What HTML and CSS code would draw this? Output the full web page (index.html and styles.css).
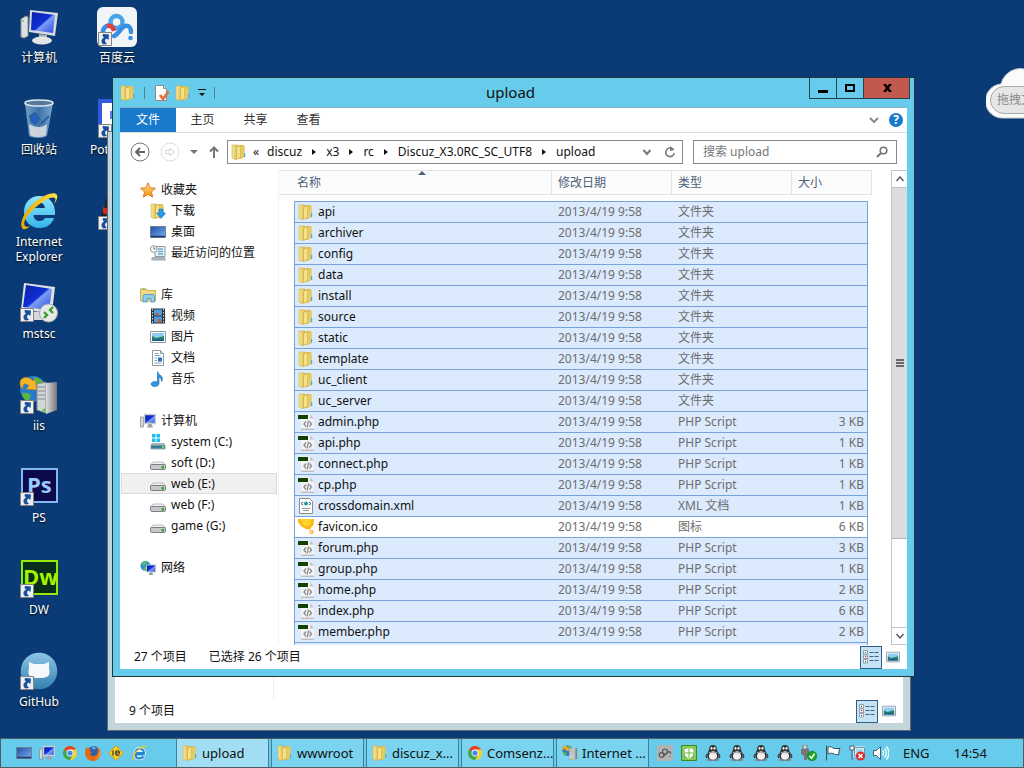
FILE: index.html
```html
<!DOCTYPE html>
<html lang="zh-CN">
<head>
<meta charset="utf-8">
<title>upload</title>
<link rel="stylesheet" href="styles.css">
</head>
<body>
<svg class="defs" aria-hidden="true">
  <defs>
    <linearGradient id="gFold" x1="0" x2="1"><stop offset="0" stop-color="#f8e99c"/><stop offset="1" stop-color="#dcb948"/></linearGradient>
    <linearGradient id="gScreen" x1="0" x2="1" y2="1"><stop offset="0" stop-color="#0a1fa0"/><stop offset=".5" stop-color="#1030d8"/><stop offset=".55" stop-color="#7d9df5"/><stop offset="1" stop-color="#2a4ee0"/></linearGradient>
    <linearGradient id="gDesk" x1="0" x2="1" y2="1"><stop offset="0" stop-color="#1d4fa8"/><stop offset="1" stop-color="#7ab0ee"/></linearGradient>
    <linearGradient id="gIe" x1="0" y1="0" x2="0" y2="1"><stop offset="0" stop-color="#8fe6ff"/><stop offset="1" stop-color="#35b4ea"/></linearGradient>
    <linearGradient id="gGold" x1="0" x2="1"><stop offset="0" stop-color="#e8a800"/><stop offset="1" stop-color="#ffe14a"/></linearGradient>
    <linearGradient id="gHub" x1="0" y1="0" x2="0" y2="1"><stop offset="0" stop-color="#8cc6e6"/><stop offset="1" stop-color="#3480b0"/></linearGradient>
    <linearGradient id="gBin" x1="0" x2="1"><stop offset="0" stop-color="#8fb6d8"/><stop offset=".5" stop-color="#4a7fb8"/><stop offset="1" stop-color="#9cc0de"/></linearGradient>
    <linearGradient id="gTower" x1="0" x2="1"><stop offset="0" stop-color="#ddd"/><stop offset="1" stop-color="#777"/></linearGradient>
    <linearGradient id="gStar" x1="0" y1="0" x2="0" y2="1"><stop offset="0" stop-color="#ffe27a"/><stop offset="1" stop-color="#f08a18"/></linearGradient>
  </defs>
  <symbol id="folder" viewBox="0 0 16 16"><path d="M1 1h6v13l-3 1.500L1 14z" fill="url(#gFold)" stroke="#cfae46" stroke-width=".6"/><path d="M8 1h4.500l1 1v11l-4 2-4-.5 2.500-1z" fill="#dfc04e"/><path d="M5.500 3.500 9.500 1.500v12l-4 2z" fill="#f5e18a" stroke="#c9a63a" stroke-width=".6"/><path d="M9.500 2.500h3.700V13l-3.700.8z" fill="#e6cb62"/><path d="M13 9h1.200v4H13z" fill="#4aa8e8"/></symbol>
  <symbol id="php" viewBox="0 0 16 16"><path d="M3 .5h9l4 4V15.500H3z" fill="#f3f3f3"/><path d="M12 .5V4.500h4z" fill="#c4c4c4"/><path d="M3 15.200h13" stroke="#a9a9a9"/><path d="M0 1h10v4H0z" fill="#124200"/><path d="m8 7.500-2 2.500 2 2.500M11.500 7.500l2 2.500-2 2.500M10.500 6.500 9.200 13.500" fill="none" stroke="#8c8c8c" stroke-width="1.300"/></symbol>
  <symbol id="xml" viewBox="0 0 16 16"><path d="M1.500.5h10l3 3v12h-13z" fill="#fff" stroke="#8f8f8f"/><path d="m5 4-2 1.500L5 7m6-3 2 1.500L11 7" fill="none" stroke="#335c85"/><circle cx="8" cy="5.500" r="2" fill="#2397a0"/><path d="M4 10.500h8M5 12.500h6" stroke="#8d949c"/></symbol>
  <symbol id="ico" viewBox="0 0 16 16"><path d="M0 0h16l-.5 6-2 2-1.500 2.500-4-.5L3.500 7.500 0 3z" fill="#fdb515"/><path d="M3 0h10v5L9 7.500 5 6z" fill="#ffd42a"/><circle cx="13.500" cy="13" r="1.700" fill="#fff0b0" stroke="#f3a216"/></symbol>
  <symbol id="star" viewBox="0 0 16 16"><path d="m8 .8 2.200 4.900 5.300.5-4 3.600 1.200 5.400L8 12.400l-4.700 2.800 1.200-5.400-4-3.600 5.300-.5z" fill="url(#gStar)" stroke="#d96b14" stroke-width=".8"/></symbol>
  <symbol id="download" viewBox="0 0 16 16"><use href="#folder" width="16" height="16"/><path d="M9 6h4v4h2.500L11 15.500 6.500 10H9z" fill="#2a9aea" stroke="#1272b8" stroke-width=".6"/></symbol>
  <symbol id="desk" viewBox="0 0 16 16"><path d="M.5 2.500h15v11H.5z" fill="url(#gDesk)" stroke="#6b7f99"/><path d="M1 12.500h14" stroke="#213c6a" stroke-width="1.500"/></symbol>
  <symbol id="recent" viewBox="0 0 16 16"><path d="M5 1.500h10v10H5z" fill="#e8eff3" stroke="#8f9aa2"/><path d="M8 4h5M8 6.500h5M8 9h5" stroke="#6aaed0" stroke-width="1.300"/><path d="M2 12h13l1 3.500H1z" fill="#a7b0b6"/><circle cx="3.800" cy="4" r="3.300" fill="#fff" stroke="#8d979d"/><path d="M3.800 2v2h1.800" fill="none" stroke="#555" stroke-width=".8"/></symbol>
  <symbol id="library" viewBox="0 0 16 16"><path d="M.5 2h6l1 1.500h8V14H.5z" fill="#f1d98a" stroke="#cfae4e"/><path d="M2 2h3" stroke="#55b848"/><path d="M3 15V9.500C3 8 4 7.500 5 7.500h7c1.500 0 2.500.7 2.500 2V15H11v-3.500H7V15z" fill="#8fd0f2" stroke="#3b93c6" stroke-width=".8"/></symbol>
  <symbol id="video" viewBox="0 0 16 16"><path d="M1 .5h14v15H1z" fill="#2c3138"/><path d="M4 1.500h8v6H4zM4 8.500h8v6H4z" fill="#4d9fdc"/><path d="m5 7 2-3 2 3zm2 7 2-4 3 4z" fill="#c2613a"/><path d="M2.500 1v14M13.500 1v14" stroke="#dfe7ee" stroke-dasharray="1.500 1.500"/></symbol>
  <symbol id="picture" viewBox="0 0 16 16"><path d="M.5 2.500h15v11H.5z" fill="#fff" stroke="#8b969f"/><path d="M2 4h12v8H2z" fill="#8ecdf0"/><path d="m2 7 4 2 8-2v5H2z" fill="#27806a"/><path d="m2 11 6-1 6 1v1H2z" fill="#1d5a92"/></symbol>
  <symbol id="doc" viewBox="0 0 16 16"><path d="M2.500.5h8l3 3v12h-11z" fill="#fff" stroke="#8c98a2"/><path d="M10.500.5v3h3" fill="#d5dee5" stroke="#8c98a2"/><path d="M4.500 3.500h4M4.500 5.500h6M4.500 8h2.500M4.500 10.500h2.500M4.500 13h7" stroke="#8aa6be"/><path d="M8 7.500h4v4H8z" fill="#2c70ba"/></symbol>
  <symbol id="music" viewBox="0 0 16 16"><path d="M7.500.5c.5 3 5 3.500 5 7.500 0 1-.5 2-1 2.500.2-3-1.500-4-2.500-4.300v6.300c0 2-2 3-4 3-2.500 0-4-1-4-2.500S3 10.500 5 10.500c1 0 2 .3 2.500.6z" fill="#2e97e0" stroke="#1c6ab0" stroke-width=".6"/></symbol>
  <symbol id="pc" viewBox="0 0 16 16"><path d="M.5 4h3v10h-3z" fill="#d4d9dd" stroke="#7e868c" stroke-width=".7"/><path d="M4.500 1.500h11v9h-11z" fill="url(#gScreen)" stroke="#c7ccd0" stroke-width="1.400"/><path d="M8.500 11h3l1.500 3.500H7z" fill="#9ba3aa"/></symbol>
  <symbol id="sysdrive" viewBox="0 0 16 16"><path d="M2 0h3.500v3.500H2zM6.500 0H10v3.500H6.500zM2 4.500h3.500V8H2zM6.500 4.500H10V8H6.500z" fill="#16bff2"/><path d="m2 9h12l1.500 2v4.500H.5V11z" fill="#aab4bc"/><path d="M1 11.500h14v3H1z" fill="#397b98"/><path d="M12 12h2v2h-2z" fill="#6be050"/></symbol>
  <symbol id="drive" viewBox="0 0 16 16"><path d="M3 7h10l2.500 3H.5z" fill="#f2f2f2" stroke="#a1a5a9" stroke-width=".7"/><rect x=".5" y="9.500" width="15" height="5" rx="1.200" fill="#c4c8cb" stroke="#7c8084"/><path d="M11.500 11h2.500v2.500h-2.500z" fill="#32a32a"/></symbol>
  <symbol id="network" viewBox="0 0 16 16"><circle cx="5.500" cy="6" r="5" fill="#2d8fd6"/><path d="M2 3c2-2 4-2 5-1L5 5 3 6zm1 5 3-1 1 3-2 1z" fill="#5cc44a"/><path d="M6.500 5h9v7h-9z" fill="url(#gScreen)" stroke="#b4bec8"/><path d="M10 12.500h2l1.500 2.500h-5z" fill="#8c98a5"/></symbol>
  <symbol id="props" viewBox="0 0 16 16"><path d="M1.500.5h8l3 3v12h-11z" fill="#fff" stroke="#8d8d8d"/><path d="M9.500.5v3h3" fill="#ddd" stroke="#8d8d8d"/><path d="m6 10 3 4 5.500-7.500" fill="none" stroke="#e8683a" stroke-width="2.600"/></symbol>
  <symbol id="details" viewBox="0 0 16 14"><path d="M.5.500h4v3.500h-4zM.5 5h4v3.500h-4zM.5 9.500h4V13h-4z" fill="#fff" stroke="#7e8b95" stroke-width=".8"/><path d="M2 2h1v1H2zM2 11h1v1H2z" fill="#345"/><path d="M2 6h1.200v1.200H2z" fill="#d22"/><path d="M6.500 2.500h4M11.500 2.500h4M6.500 6.500h4M11.500 6.500h4M6.500 10.500h4M11.500 10.500h4" stroke="#4b5f70"/></symbol>
  <symbol id="shortcut" viewBox="0 0 14 14"><path d="M.5.500h13v13H.5z" fill="#e9f0f8" stroke="#8b8378"/><path d="M5.500 12.500c-3-2-2.500-5.500.5-7L4.500 4 5 2l6 .5-.5 5.500-2-1.500c-2 1-2 3 .5 5.500z" fill="#1c4f9c"/></symbol>
  <symbol id="ie" viewBox="0 0 40 40"><path d="M20 5C11 5 5 12 5 21s6 16 16 16c7 0 12-4 14-10h-9c-1 2-3 3-5 3-4 0-6-2-6.500-6H36C37 12 30 5 20 5zm-5.500 12c.5-4 2.500-5.500 5.800-5.500 3.200 0 5.200 2 5.700 5.500z" fill="url(#gIe)"/><path d="M4 38C-1 34 5 20 16 11 26 3 36 0 38 4c1 3-1 6-3 9 1-3 2-5 1-6-2-2-10 1-19 9C9 23 3 31 6 35c1 1 3 1 5 0-2 2-5 4-7 3z" fill="url(#gGold)"/></symbol>
  <symbol id="ie-small" viewBox="0 0 16 16"><path d="M13.500 9.500H4.500c0 5 6 4.500 8 2M4.500 8c0-5.500 8.500-5.500 8.500 0z" fill="none" stroke="#fff" stroke-width="3.600"/><path d="M13.500 9.500H4.500c0 5 6 4.500 8 2M4.500 8c0-5.500 8.500-5.500 8.500 0z" fill="none" stroke="#2489d0" stroke-width="2.200"/><path d="M3 15c-3-1-1-6 4-10s8-4.500 8-2.500" fill="none" stroke="#efc22c" stroke-width="1.300"/></symbol>
  <symbol id="chrome" viewBox="0 0 16 16"><circle cx="8" cy="8" r="7" fill="#f9cf2c"/><path d="M8 8 1.900 4.500A7 7 0 0 1 14.100 4.500H8z" fill="#dd4434"/><path d="M1.900 4.500A7 7 0 0 0 8 15l3-5-3-2z" fill="#39a853"/><circle cx="8" cy="8" r="3.400" fill="#fff"/><circle cx="8" cy="8" r="2.600" fill="#4284e8"/></symbol>
  <symbol id="firefox" viewBox="0 0 16 16"><circle cx="8.500" cy="7.500" r="6.500" fill="#2d5fa6"/><path d="M6 2c2-1 4 0 5 1l-2 2z" fill="#6ca8e2"/><path d="M1 2c1 0 1.500 1 2 1.500L6 4 4.500 6l2.500 1-2 2c1 3 6 3 7.500-1C13.500 5 12 3 11 2c4 1 5.500 5 4.300 8.500C14 14 11 16 8 16 3 16 0 12 0 8c0-2 .5-4 1-6z" fill="#e66a12"/><path d="M15 5c1 4-1 8-5 9 3-2 4-4 4-6z" fill="#fbb52c"/></symbol>
  <symbol id="ietester" viewBox="0 0 16 16"><path d="m8 .5 7.500 7.500L8 15.500.5 8z" fill="#f7ca28" stroke="#b98d18" stroke-width=".8"/><path d="M5 5.500v5M8 8h3.500c0-3-3.800-3-3.800 0s2.800 2.800 3.800 1.500" fill="none" stroke="#333" stroke-width="1.200"/></symbol>
  <symbol id="iis" viewBox="0 0 40 40"><circle cx="14" cy="14" r="13" fill="#2679cd"/><path d="M3 18c4-1 8 0 9 3l-3 6c-4-2-6-5-6-9zM15 2c4 0 9 3 10 7l-6 4-4-5z" fill="#59b740"/><path d="M1 8c0-6 8-8 13-2l2-2 2 11-11-1 3-3C6 7 3 9 4 14 2 13 1 11 1 8z" fill="#f3b32b" stroke="#bd7d12" stroke-width=".6"/><path d="M18 9 27 7v31l-9-3z" fill="#d2d6d9" stroke="#888"/><path d="m27 8 11-1v28l-11 4z" fill="url(#gTower)"/><path d="M19 12h7M19 16h7M19 20h7M19 24h7" stroke="#858a90"/><circle cx="25" cy="35" r="1.500" fill="#4bd02c"/></symbol>
  <symbol id="qq" viewBox="0 0 16 16"><path d="M2 9C1 11 .5 13 2 13zM14 9c1 2 1.500 4 0 4z" fill="#333" stroke="#444"/><path d="M3 14c-2 2 3 2.500 5 1 2 1.500 7 1 5-1z" fill="#aaa" stroke="#444" stroke-width=".5"/><path d="M8 0C4.500 0 4 3 4 5.500 2 8 2 10 3 13c2 2.500 8 2.500 10 0 1-3 1-5-1-7.500C12 3 11.500 0 8 0z" fill="#333"/><ellipse cx="8" cy="11" rx="4" ry="3.800" fill="#f2f2f2"/><ellipse cx="6.500" cy="3.300" rx="1" ry="1.400" fill="#fff"/><ellipse cx="9.500" cy="3.300" rx="1" ry="1.400" fill="#fff"/><path d="M5.500 6h5L8 7.300z" fill="#bbb"/><path d="M4 7.500c2 1 6 1 8 0" fill="none" stroke="#ccc" stroke-width="1.200"/></symbol>
</svg>

<main class="desktop">
  <ul class="shortcuts">
    <li><a href="#"><svg class="big" viewBox="0 0 40 40"><path d="m2 12 5-3 2 1v19l-4 2-3-1z" fill="#dde0e2" stroke="#8a8f94"/><circle cx="4" cy="14" r="1" fill="#5ae02e"/><path d="m11 3 28 3-3 23-26-4z" fill="#d8dcdf"/><path d="m13 5 23 3-2 18-22-3z" fill="url(#gScreen)"/><path d="m20 27 8 1v4l-8-1z" fill="#a9adb1"/><ellipse cx="23" cy="33.500" rx="10" ry="4" fill="#e3e5e7"/></svg><span>计算机</span></a></li>
    <li><a href="#"><svg class="big" viewBox="0 0 40 40"><path d="m6 4 4 33c5 3 14 3 18 0l6-33z" fill="url(#gBin)" opacity=".8"/><path d="m10 25 1 11c4 3 12 3 16 0l1-11c-4 4-12 4-18 0z" fill="#d9dde2" opacity=".9"/><ellipse cx="20" cy="4" rx="14" ry="3" fill="#55779a" stroke="#dce7ef" stroke-width="1.500"/><path d="m11 17 5-3 4 6-4 5-3-2zM30 17l-8 8" fill="#2860c8" stroke="#2860a0" stroke-width="2"/></svg><span>回收站</span></a></li>
    <li><a href="#"><svg class="big"><use href="#ie"/></svg><span>Internet Explorer</span></a></li>
    <li><a href="#"><svg class="big" viewBox="0 0 40 40"><path d="m5 0 31 4-3 26-31-3z" fill="#dfe2e5"/><path d="m7 2 26 4-3 21-26-3z" fill="url(#gScreen)"/><path d="M14 29h12v8H14z" fill="#d5d8da"/><circle cx="29.500" cy="30" r="9" fill="#e8e9ea" stroke="#aaa"/><path d="m25 29 3 3-3 3M34 24l-3 3 3 3" fill="none" stroke="#36a02c" stroke-width="2.400"/><use href="#shortcut" x="1" y="25" width="14" height="14"/></svg><span>mstsc</span></a></li>
    <li><a href="#"><svg class="big" viewBox="0 0 40 40"><use href="#iis" width="40" height="40"/><use href="#shortcut" x="1" y="25" width="14" height="14"/></svg><span>iis</span></a></li>
    <li><a href="#"><svg class="big" viewBox="0 0 40 40"><path d="M3 2h35v33H3z" fill="#0d0a4c" stroke="#84b8f0" stroke-width="2"/><text class="adobe" x="8" y="26" fill="#9bc9fb">Ps</text><use href="#shortcut" x="1" y="25" width="14" height="14"/></svg><span>PS</span></a></li>
    <li><a href="#"><svg class="big" viewBox="0 0 40 40"><path d="M3 2h35v33H3z" fill="#072d1c" stroke="#93ea00" stroke-width="2"/><text class="adobe" x="4" y="26" fill="#a5f200">Dw</text><use href="#shortcut" x="1" y="25" width="14" height="14"/></svg><span>DW</span></a></li>
    <li><a href="#"><svg class="big" viewBox="0 0 40 40"><circle cx="20" cy="20" r="18.300" fill="url(#gHub)"/><path d="m10 11 5 2h10l5-2v6c2 8-1 10-10 10S8 25 10 17z" fill="#f5f8fa"/><use href="#shortcut" x="1" y="25" width="14" height="14"/></svg><span>GitHub</span></a></li>
    <li><a href="#"><svg class="big" viewBox="0 0 40 40"><rect width="40" height="40" rx="6" fill="#f2f5f8"/><g fill="none" stroke-width="4.500"><circle cx="19.500" cy="15" r="6" stroke="#48a5e8"/><path d="M17 29c4-1 7-9 11-10 5-1 6 3 6 6" stroke="#3b8fe0" stroke-linecap="round"/><path d="M6 28c-1-7 3-10 7-9" stroke="#3b8fe0"/><path d="M10 19c4-1 6 1 7 5" stroke="#e43e3c"/></g><circle cx="33.500" cy="31" r="2.300" fill="#3b8fe0"/><use href="#shortcut" x="1" y="25" width="14" height="14"/></svg><span>百度云</span></a></li>
    <li><a href="#"><svg class="big" viewBox="0 0 40 40"><path d="M1 0h38v39H1z" fill="#3558e0"/><path d="M5 4h30v30H5z" fill="#fff"/><path d="M13 12h14v8H13z" fill="#5b7bf0"/><use href="#shortcut" x="1" y="25" width="14" height="14"/></svg><span>PotPlayer</span></a></li>
    <li><a href="#" aria-label="QQ"><svg class="big" viewBox="0 0 40 40"><path d="M20 0C10 0 8 8 8 15 3 22 2 30 5 36h30c3-6 2-14-3-21C32 8 30 0 20 0z" fill="#23232a"/><path d="M6 16c8 4 20 4 28 0v6c-8 4-20 4-28 0z" fill="#e02a1c"/><ellipse cx="20" cy="30" rx="11" ry="8" fill="#fff"/><use href="#shortcut" x="1" y="25" width="14" height="14"/></svg></a></li>
  </ul>

  <aside class="cloud">
    <svg viewBox="0 0 76 54" class="cloud-shape"><path d="M18 52a17 17 0 0 1-3-34A20 20 0 0 1 50 10a20 20 0 0 1 16 10 17 17 0 0 1-4 32z" fill="#fbfbfb" stroke="#c9ccd0"/></svg>
    <button type="button" class="cloud-label">拖拽文</button>
  </aside>

  <section class="window window-back" aria-label="wwwroot">
    <div class="back-body"><div class="back-side"></div></div>
    <footer class="status">
      <span>9 个项目</span>
      <div class="views"><button type="button" class="view on" aria-label="详细信息"><svg class="ico"><use href="#details"/></svg></button><button type="button" class="view" aria-label="大图标"><svg class="ico14"><use href="#picture"/></svg></button></div>
    </footer>
  </section>

  <section class="window window-front" aria-label="upload">
    <header class="titlebar">
      <div class="quick">
        <svg class="ico"><use href="#folder"/></svg><i class="bar"></i>
        <button type="button" aria-label="属性"><svg class="ico"><use href="#props"/></svg></button>
        <button type="button" aria-label="新建文件夹"><svg class="ico"><use href="#folder"/></svg></button>
        <button type="button" aria-label="自定义"><svg class="caret" viewBox="0 0 8 8"><path d="M0 0h8v1H0zM1 4h6L4 7z" fill="#111"/></svg></button><i class="bar"></i>
      </div>
      <h1>upload</h1>
      <div class="controls">
        <button type="button" aria-label="最小化"><svg viewBox="0 0 12 12"><path d="M1 8h10v3H1z"/></svg></button>
        <button type="button" aria-label="最大化"><svg viewBox="0 0 12 12"><path d="M1 2h10v8H1zm2 2v4h6V4z" fill-rule="evenodd"/></svg></button>
        <button type="button" class="close" aria-label="关闭"><svg viewBox="0 0 12 12"><path d="M2 2h3l1.500 2L8 2h3L8 6l3 4H8L6.500 8 5 10H2l3-4z"/></svg></button>
      </div>
    </header>
    <nav class="ribbon">
      <button type="button" class="file">文件</button><button type="button">主页</button><button type="button">共享</button><button type="button">查看</button>
      <span class="grow"></span>
      <button type="button" class="icon-btn" aria-label="展开功能区"><svg class="chev" viewBox="0 0 10 10"><path d="m1 3 4 4 4-4" fill="none" stroke="#8a8a8a" stroke-width="2"/></svg></button>
      <button type="button" class="icon-btn" aria-label="帮助"><span class="help">?</span></button>
    </nav>
    <div class="nav">
      <button type="button" class="icon-btn" aria-label="后退"><svg class="round" viewBox="0 0 20 20"><circle cx="10" cy="10" r="9" fill="none" stroke="#747474"/><path d="M15 10H6m4-4-4 4 4 4" fill="none" stroke="#666" stroke-width="2"/></svg></button>
      <button type="button" class="icon-btn" aria-label="前进"><svg class="round" viewBox="0 0 20 20"><circle cx="10" cy="10" r="9" fill="none" stroke="#dcdcdc"/><path d="M5.500 8.500H10V6l4.500 4-4.500 4v-2.500H5.500z" fill="none" stroke="#d0d0d0"/></svg></button>
      <button type="button" class="icon-btn history" aria-label="最近的位置"><svg viewBox="0 0 8 8"><path d="M0 2h8L4 6z" fill="#777"/></svg></button>
      <button type="button" class="icon-btn up" aria-label="向上"><svg viewBox="0 0 12 14"><path d="M6 13V3M2 6.500l4-4 4 4" fill="none" stroke="#777" stroke-width="2"/></svg></button>
      <div class="address">
        <svg class="ico"><use href="#folder"/></svg>
        <span class="more">«</span>
        <a href="#">discuz</a><i class="sep"></i><a href="#">x3</a><i class="sep"></i><a href="#">rc</a><i class="sep"></i><a href="#">Discuz_X3.0RC_SC_UTF8</a><i class="sep"></i><a href="#">upload</a>
        <span class="grow"></span>
        <button type="button" class="icon-btn" aria-label="历史"><svg class="chev" viewBox="0 0 10 10"><path d="m1.500 3 3.500 4 3.500-4" fill="none" stroke="#777" stroke-width="2"/></svg></button>
        <button type="button" class="icon-btn refresh" aria-label="刷新"><svg viewBox="0 0 12 12"><path d="M9 3.200A4.300 4.300 0 1 0 10.300 7" fill="none" stroke="#777" stroke-width="1.600"/><path d="M6 0v5l4.500-1z" fill="#777"/></svg></button>
      </div>
      <label class="search"><input type="text" placeholder="搜索 upload" aria-label="搜索 upload"><svg viewBox="0 0 12 12"><circle cx="7.500" cy="4.500" r="3.300" fill="none" stroke="#777" stroke-width="1.600"/><path d="m5 7-4 4" stroke="#777" stroke-width="2.200"/></svg></label>
    </div>
    <div class="content">
      <aside class="tree">
        <ul>
          <li><a href="#"><svg class="ico"><use href="#star"/></svg>收藏夹</a></li>
          <li class="sub"><a href="#"><svg class="ico"><use href="#download"/></svg>下载</a></li>
          <li class="sub"><a href="#"><svg class="ico"><use href="#desk"/></svg>桌面</a></li>
          <li class="sub"><a href="#"><svg class="ico"><use href="#recent"/></svg>最近访问的位置</a></li>
        </ul>
        <ul>
          <li><a href="#"><svg class="ico"><use href="#library"/></svg>库</a></li>
          <li class="sub"><a href="#"><svg class="ico"><use href="#video"/></svg>视频</a></li>
          <li class="sub"><a href="#"><svg class="ico"><use href="#picture"/></svg>图片</a></li>
          <li class="sub"><a href="#"><svg class="ico"><use href="#doc"/></svg>文档</a></li>
          <li class="sub"><a href="#"><svg class="ico"><use href="#music"/></svg>音乐</a></li>
        </ul>
        <ul>
          <li><a href="#"><svg class="ico"><use href="#pc"/></svg>计算机</a></li>
          <li class="sub"><a href="#"><svg class="ico"><use href="#sysdrive"/></svg>system (C:)</a></li>
          <li class="sub"><a href="#"><svg class="ico"><use href="#drive"/></svg>soft (D:)</a></li>
          <li class="sub current"><a href="#"><svg class="ico"><use href="#drive"/></svg>web (E:)</a></li>
          <li class="sub"><a href="#"><svg class="ico"><use href="#drive"/></svg>web (F:)</a></li>
          <li class="sub"><a href="#"><svg class="ico"><use href="#drive"/></svg>game (G:)</a></li>
        </ul>
        <ul>
          <li><a href="#"><svg class="ico"><use href="#network"/></svg>网络</a></li>
        </ul>
      </aside>
      <div class="list">
        <table class="files">
          <thead><tr><th class="sorted">名称</th><th>修改日期</th><th>类型</th><th>大小</th></tr></thead>
          <tbody>
            <tr><td><svg class="ico"><use href="#folder"/></svg>api</td><td>2013/4/19 9:58</td><td>文件夹</td><td></td></tr>
            <tr><td><svg class="ico"><use href="#folder"/></svg>archiver</td><td>2013/4/19 9:58</td><td>文件夹</td><td></td></tr>
            <tr><td><svg class="ico"><use href="#folder"/></svg>config</td><td>2013/4/19 9:58</td><td>文件夹</td><td></td></tr>
            <tr><td><svg class="ico"><use href="#folder"/></svg>data</td><td>2013/4/19 9:58</td><td>文件夹</td><td></td></tr>
            <tr><td><svg class="ico"><use href="#folder"/></svg>install</td><td>2013/4/19 9:58</td><td>文件夹</td><td></td></tr>
            <tr><td><svg class="ico"><use href="#folder"/></svg>source</td><td>2013/4/19 9:58</td><td>文件夹</td><td></td></tr>
            <tr><td><svg class="ico"><use href="#folder"/></svg>static</td><td>2013/4/19 9:58</td><td>文件夹</td><td></td></tr>
            <tr><td><svg class="ico"><use href="#folder"/></svg>template</td><td>2013/4/19 9:58</td><td>文件夹</td><td></td></tr>
            <tr><td><svg class="ico"><use href="#folder"/></svg>uc_client</td><td>2013/4/19 9:58</td><td>文件夹</td><td></td></tr>
            <tr><td><svg class="ico"><use href="#folder"/></svg>uc_server</td><td>2013/4/19 9:58</td><td>文件夹</td><td></td></tr>
            <tr><td><svg class="ico"><use href="#php"/></svg>admin.php</td><td>2013/4/19 9:58</td><td>PHP Script</td><td>3 KB</td></tr>
            <tr><td><svg class="ico"><use href="#php"/></svg>api.php</td><td>2013/4/19 9:58</td><td>PHP Script</td><td>1 KB</td></tr>
            <tr><td><svg class="ico"><use href="#php"/></svg>connect.php</td><td>2013/4/19 9:58</td><td>PHP Script</td><td>1 KB</td></tr>
            <tr><td><svg class="ico"><use href="#php"/></svg>cp.php</td><td>2013/4/19 9:58</td><td>PHP Script</td><td>1 KB</td></tr>
            <tr><td><svg class="ico"><use href="#xml"/></svg>crossdomain.xml</td><td>2013/4/19 9:58</td><td>XML 文档</td><td>1 KB</td></tr>
            <tr class="plain"><td><svg class="ico"><use href="#ico"/></svg>favicon.ico</td><td>2013/4/19 9:58</td><td>图标</td><td>6 KB</td></tr>
            <tr><td><svg class="ico"><use href="#php"/></svg>forum.php</td><td>2013/4/19 9:58</td><td>PHP Script</td><td>3 KB</td></tr>
            <tr><td><svg class="ico"><use href="#php"/></svg>group.php</td><td>2013/4/19 9:58</td><td>PHP Script</td><td>1 KB</td></tr>
            <tr><td><svg class="ico"><use href="#php"/></svg>home.php</td><td>2013/4/19 9:58</td><td>PHP Script</td><td>2 KB</td></tr>
            <tr><td><svg class="ico"><use href="#php"/></svg>index.php</td><td>2013/4/19 9:58</td><td>PHP Script</td><td>6 KB</td></tr>
            <tr><td><svg class="ico"><use href="#php"/></svg>member.php</td><td>2013/4/19 9:58</td><td>PHP Script</td><td>2 KB</td></tr>
            <tr><td><svg class="ico"><use href="#php"/></svg></td><td></td><td></td><td></td></tr>
          </tbody>
        </table>
        <div class="scroll">
          <button type="button" aria-label="向上滚动"><svg class="chev" viewBox="0 0 10 10"><path d="m1.500 7 3.500-4 3.500 4" fill="none" stroke="#555" stroke-width="1.400"/></svg></button>
          <div class="track"><div class="thumb"><svg viewBox="0 0 8 8"><path d="M0 1h8M0 4h8M0 7h8" stroke="#444" stroke-width="1.400"/></svg></div></div>
          <button type="button" aria-label="向下滚动"><svg class="chev" viewBox="0 0 10 10"><path d="m1.500 3 3.500 4 3.500-4" fill="none" stroke="#555" stroke-width="1.400"/></svg></button>
        </div>
      </div>
    </div>
    <footer class="status">
      <span>27 个项目</span><span>已选择 26 个项目</span>
      <div class="views"><button type="button" class="view on" aria-label="详细信息"><svg class="ico"><use href="#details"/></svg></button><button type="button" class="view" aria-label="大图标"><svg class="ico14"><use href="#picture"/></svg></button></div>
    </footer>
  </section>

  <footer class="taskbar">
    <div class="launch">
      <button type="button" aria-label="桌面"><svg class="ico"><use href="#desk"/></svg></button>
      <button type="button" aria-label="计算机"><svg class="ico"><use href="#pc"/></svg></button>
      <button type="button" aria-label="Chrome"><svg class="ico"><use href="#chrome"/></svg></button>
      <button type="button" aria-label="Firefox"><svg class="ico"><use href="#firefox"/></svg></button>
      <button type="button" aria-label="IETester"><svg class="ico"><use href="#ietester"/></svg></button>
      <button type="button" aria-label="Internet Explorer"><svg class="ico"><use href="#ie-small"/></svg></button>
    </div>
    <div class="tasks">
      <button type="button" class="active"><svg class="ico"><use href="#folder"/></svg>upload</button>
      <button type="button"><svg class="ico"><use href="#folder"/></svg>wwwroot</button>
      <button type="button"><svg class="ico"><use href="#folder"/></svg>discuz_x...</button>
      <button type="button"><svg class="ico"><use href="#chrome"/></svg>Comsenz...</button>
      <button type="button"><svg class="ico"><use href="#iis"/></svg>Internet ...</button>
    </div>
    <div class="tray">
      <svg class="ico" viewBox="0 0 16 16"><rect width="16" height="16" rx="2" fill="#b1b4b5"/><circle cx="8" cy="6.500" r="2.500" fill="none" stroke="#555" stroke-width="1.200"/><circle cx="4.500" cy="10" r="2.300" fill="none" stroke="#555" stroke-width="1.200"/><path d="m7 11 4-4c2-1 3 1 2.500 2M13 11v1" fill="none" stroke="#555" stroke-width="1.200"/></svg>
      <svg class="ico" viewBox="0 0 16 16"><path d="M.5.500h15v15H.5z" fill="#68b83a" stroke="#3f8a22"/><path d="M2 2h12v12H2z" fill="none" stroke="#a6dc7c"/><path d="M3.500 4 8 3l4.500 1v4c0 3-2 4.500-4.500 5.500C5.500 12.500 3.500 11 3.500 8z" fill="#fff"/><path d="M8 3v10M3.500 8h9" stroke="#68b83a"/></svg>
      <svg class="ico"><use href="#qq"/></svg><svg class="ico"><use href="#qq"/></svg><svg class="ico"><use href="#qq"/></svg><svg class="ico"><use href="#qq"/></svg>
      <svg class="ico" viewBox="0 0 16 16"><path d="M2 0h4v4H2z" fill="#ddd" stroke="#777"/><path d="M0 4h8v5l-2 2v4H3v-4L0 9z" fill="#777"/><circle cx="11" cy="11" r="4.800" fill="#20a12c" stroke="#15751d" stroke-width=".6"/><path d="m8.500 11 2 2.200 3-4.400" fill="none" stroke="#fff" stroke-width="1.600"/></svg>
      <svg class="ico" viewBox="0 0 16 16"><path d="M1.500.5v15M3 2c3-1.500 4 1.500 7 1.500h5c-1 2-1.500 4-1 6-3 .5-4 0-6-1C6 8 4.500 8 3 9z" fill="#fff" stroke="#33525f"/></svg>
      <svg class="ico" viewBox="0 0 16 16"><path d="M5.500 2.500h10v8h-10z" fill="#9edcf0" stroke="#fff" stroke-width="2"/><path d="M5.500 2.500h10v8h-10z" fill="none" stroke="#48626e" stroke-width=".7"/><path d="M1 1h4v4H1zM3 5v10" fill="#fff" stroke="#48626e"/><circle cx="11.500" cy="11" r="4.600" fill="#df2c2c"/><path d="m9.500 9 4 4m0-4-4 4" stroke="#fff" stroke-width="1.600"/></svg>
      <svg class="ico" viewBox="0 0 16 16"><path d="M.5 5.500h3l4-4v13l-4-4h-3z" fill="#fff" stroke="#47616d"/><path d="M9.500 5.500c1.300 1.500 1.300 3.500 0 5M11.500 3.500c2.500 2.500 2.500 6.500 0 9M13.500 1.500c3 4 3 9 0 13" fill="none" stroke="#fff" stroke-width="1.300"/></svg>
    </div>
    <button type="button" class="lang">ENG</button>
    <time class="clock">14:54</time>
  </footer>
</main>
</body>
</html>
```

FILE: styles.css
```css
* { box-sizing: border-box; }

body {
  margin: 0;
  font: 12px/20px "Noto Sans", "Noto Sans CJK SC", sans-serif;
  color: #111;
}

svg { display: block; flex: none; }
.defs { position: absolute; width: 0; height: 0; }
ul { list-style: none; margin: 0; padding: 0; }
a { color: inherit; text-decoration: none; }
button {
  font: inherit;
  color: inherit;
  margin: 0;
  padding: 0;
  border: 0;
  background: none;
}
.ico { width: 16px; height: 16px; }
.ico14 { width: 14px; height: 14px; }
.chev { width: 10px; height: 10px; }
.grow { flex: 1; }
.icon-btn { display: flex; align-items: center; justify-content: center; }

.desktop {
  position: relative;
  height: 100vh;
  min-height: 600px;
  overflow: hidden;
  background: #0a3b76;
  display: flex;
  flex-direction: column;
}

/* Desktop shortcuts */
.shortcuts {
  flex: 1;
  display: grid;
  grid-auto-flow: column;
  grid-template-rows: repeat(8, 92px);
  grid-auto-columns: 78px;
  justify-content: start;
}
.shortcuts a {
  display: flex;
  flex-direction: column;
  align-items: center;
  gap: 3px;
  padding-top: 7px;
  color: #fff;
  line-height: 15px;
  text-align: center;
  text-shadow: 0 1px 2px #000;
}
.shortcuts span { width: 64px; }
.big { width: 40px; height: 40px; }
.adobe { font: bold 22px "Open Sans", sans-serif; text-shadow: none; }

/* Upload bubble at the screen edge */
.cloud {
  position: absolute;
  top: 66px;
  right: -38px;
  width: 76px;
}
.cloud-shape { width: 76px; height: 54px; }
.cloud-label {
  position: absolute;
  top: 20px;
  left: 4px;
  width: 68px;
  height: 28px;
  padding-left: 6px;
  border: 1px solid #aaa;
  border-radius: 14px;
  background: #e6e6e6;
  color: #8a8a8a;
  text-align: left;
}

/* Windows */
.window {
  position: absolute;
  display: flex;
  flex-direction: column;
}
.window-back {
  inset: 131px 113px 37px 107px;
  padding: 7px;
  border: 1px solid #5f6b70;
  background: #c3d5db;
}
.back-body { flex: 1; display: flex; background: #fff; }
.back-side { width: 159px; border-right: 1px solid #f0f0f0; }
.window-front {
  inset: 77px 109px 91px 112px;
  padding: 0 7px 7px;
  border: 1px solid #22343c;
  background: #67cbeb;
}

.titlebar {
  display: grid;
  grid-template-columns: 1fr auto 1fr;
  height: 30px;
  border-bottom: 1px solid #86b3c3;
}
.titlebar h1 {
  margin: 0;
  padding-right: 6px;
  font-size: 15px;
  font-weight: 400;
  line-height: 29px;
}
.quick { display: flex; align-items: center; gap: 5px; }
.bar { width: 1px; height: 12px; margin: 0 4px 0 3px; background: #4f8295; }
.caret { width: 8px; height: 8px; margin-left: 2px; }
.controls {
  display: flex;
  justify-self: end;
  height: 21px;
  margin-right: -3px;
  border: 1px solid #29424c;
  border-top: 0;
}
.controls button {
  width: 27px;
  display: flex;
  align-items: center;
  justify-content: center;
  border-right: 1px solid #29424c;
}
.controls .close { width: 45px; border: 0; background: #c3584f; }
.controls svg { width: 12px; height: 12px; }

.ribbon {
  display: flex;
  height: 25px;
  background: #fff;
  border-bottom: 1px solid #dcdcdc;
  line-height: 24px;
  color: #333;
}
.ribbon > button { width: 53px; }
.ribbon > .file { width: 56px; background: #1979ca; color: #fff; }
.ribbon > .icon-btn { width: 22px; }
.help {
  width: 14px;
  height: 14px;
  border-radius: 7px;
  background: #1979ca;
  color: #fff;
  font-weight: 700;
  line-height: 14px;
}

.nav {
  display: flex;
  align-items: center;
  height: 37px;
  padding: 0 10px;
  background: #fff;
}
.round { width: 20px; height: 20px; margin-right: 10px; }
.history { width: 8px; }
.history svg { width: 8px; height: 8px; }
.up { margin: 0 7px 0 10px; }
.up svg { width: 12px; height: 14px; }
.address {
  flex: 1;
  display: flex;
  align-items: center;
  height: 24px;
  margin-right: 10px;
  padding: 0 6px 0 3px;
  border: 1px solid #888;
  line-height: 18px;
  white-space: nowrap;
}
.more { margin: 0 8px 0 6px; }
.sep {
  margin: 0 10px;
  border: 4px solid transparent;
  border-width: 3px 0 3px 4px;
  border-left-color: #111;
}
.refresh { margin-left: 12px; }
.refresh svg { width: 12px; height: 12px; }
.search {
  display: flex;
  align-items: center;
  width: 204px;
  height: 24px;
  padding: 0 8px 0 9px;
  border: 1px solid #888;
}
.search input {
  flex: 1;
  min-width: 0;
  padding: 0;
  border: 0;
  outline: 0;
  font: inherit;
}
.search input::placeholder { color: #777; opacity: 1; }
.search svg { width: 12px; height: 12px; }

.content { flex: 1; display: flex; min-height: 0; background: #fff; }
.tree {
  width: 159px;
  padding: 9px 1px 0;
  border-right: 1px solid #f2f2f2;
}
.tree ul { margin-bottom: 21px; }
.tree a {
  display: flex;
  align-items: center;
  gap: 5px;
  height: 21px;
  padding-left: 18px;
  border: 1px solid transparent;
  white-space: nowrap;
}
.tree .sub a { padding-left: 28px; }
.tree .current a { background: #f0f0f0; border-color: #dadada; }

.list { flex: 1; display: flex; min-width: 0; overflow: hidden; }
.files {
  display: block;
  flex: 1;
  margin-right: 19px;
  overflow: hidden;
}
.files thead, .files tbody { display: block; }
.files tr { display: grid; grid-template-columns: 1fr 120px 120px 75px; }
.files thead tr { grid-template-columns: 1fr 120px 120px 80px; }
.files th {
  height: 25px;
  padding: 2px 6px;
  border: 1px solid #e3e3e3;
  border-left: 0;
  background: #fcfcfc;
  color: #4c607a;
  font-weight: 400;
  text-align: left;
}
.files th.sorted { position: relative; padding-left: 18px; }
.sorted::after {
  content: "";
  position: absolute;
  top: 0;
  left: 51%;
  border: 4px solid transparent;
  border-top: 0;
  border-bottom-color: #4c607a;
}
.files tbody { margin: 6px 4px 0 15px; border: 1px solid #78a2d8; }
.files tbody tr { height: 21px; background: #dbeafd; border-bottom: 1px solid #78a2d8; }
.files tbody .plain { background: #fff; }
.files td {
  display: flex;
  align-items: center;
  gap: 4px;
  padding: 0 3px 0 6px;
  color: #6d6d6d;
  white-space: nowrap;
}
.files td:first-child { padding-left: 3px; color: #111; }
.files td:last-child { justify-content: flex-end; }

.scroll {
  display: flex;
  flex-direction: column;
  width: 16px;
  border: 1px solid #c4c4c4;
  border-right: 0;
}
.scroll button {
  display: flex;
  align-items: center;
  justify-content: center;
  height: 16px;
}
.track { flex: 1; border: 1px solid #c4c4c4; border-width: 1px 0; }
.thumb {
  display: flex;
  align-items: center;
  justify-content: center;
  height: 80%;
  background: #dcdcdc;
  border-bottom: 1px solid #b4b4b4;
}
.thumb svg { width: 8px; height: 8px; }

.status {
  display: flex;
  align-items: center;
  gap: 22px;
  height: 24px;
  padding-left: 14px;
  background: #fff;
}
.views { display: flex; margin-left: auto; padding-right: 3px; }
.view {
  display: flex;
  align-items: center;
  justify-content: center;
  width: 22px;
  height: 23px;
}
.view.on { background: #c5e3f6; border: 1px solid #2f5f86; }

/* Taskbar */
.taskbar {
  display: flex;
  height: 30px;
  background: #67cbeb;
  border: 1px solid #4f5d63;
  font-size: 13px;
}
.launch { display: flex; align-items: center; gap: 7px; width: 175px; padding-left: 15px; }
.tasks { display: flex; gap: 2px; }
.tasks button {
  display: flex;
  align-items: center;
  gap: 4px;
  width: 93px;
  padding-left: 5px;
  border: 1px solid #437f94;
  border-width: 0 1px;
  background: #7ad3ef;
  white-space: nowrap;
}
.tasks .active { background: #a2def3; }
.tray { display: flex; align-items: center; gap: 8px; margin-left: 8px; }
.lang { margin-left: 14px; }
.clock { margin-left: auto; padding-right: 36px; line-height: 28px; }
```
